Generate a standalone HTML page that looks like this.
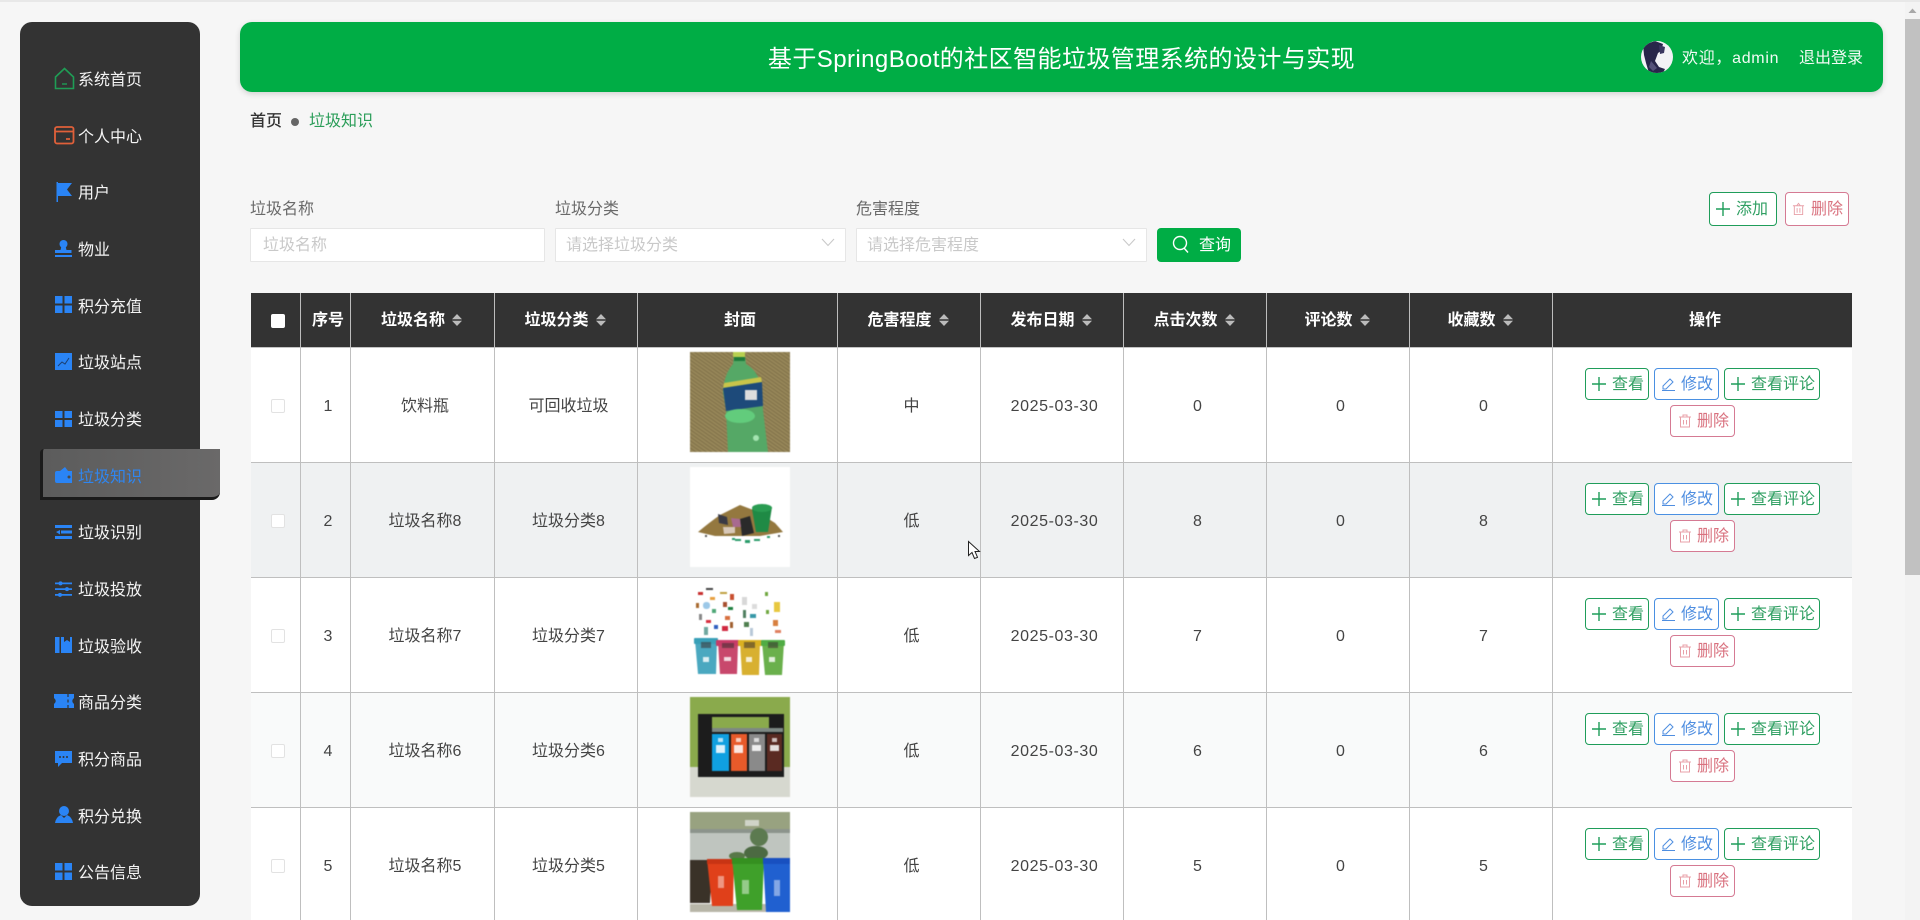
<!DOCTYPE html>
<html lang="zh"><head><meta charset="utf-8"><title>垃圾知识</title>
<style>
*{box-sizing:border-box}
html,body{margin:0;padding:0;width:1920px;height:920px;overflow:hidden;background:#f6f6f6;font-family:"Liberation Sans","Noto Sans CJK SC",sans-serif;font-size:16px;color:#444}
#wrap{position:absolute;left:0;top:0;width:1920px;height:920px;overflow:hidden}
.t{position:absolute;line-height:20px;white-space:nowrap;margin-top:2px}
#top{position:absolute;left:0;top:0;width:1920px;height:2px;background:#e8e8e8}
#side{position:absolute;left:20px;top:22px;width:180px;height:884px;background:#333;border-radius:12px}
#act{position:absolute;left:40px;top:449px;width:180px;height:51px;border-left:3px solid #1b1b1b;border-bottom:3px solid #1b1b1b;border-radius:4px 0 8px 0;background:linear-gradient(90deg,#5c5c5c,#6a6969)}
.s{color:#f4f4f4;left:78px}
#head{position:absolute;left:240px;top:22px;width:1643px;height:70px;background:#00ad45;border-radius:12px;box-shadow:0 2px 6px rgba(0,0,0,.15)}
.inp{position:absolute;top:228px;height:34px;background:#fff;border:1px solid #e6e6e6;border-radius:1px}
.ph{color:#c9c9c9}
.lb{color:#6a6a6a}
table{position:absolute;left:251px;top:293px;width:1601px;border-collapse:separate;border-spacing:0;table-layout:fixed;background:#fff}
th{background:#333;color:#fff;height:55px;font-weight:700;padding:2px 0 0 5px;border-right:1px solid #bdbdbd;border-bottom:1px solid #c4c4c4;text-align:center;line-height:20px}
th:last-child,td:last-child{border-right:0}
td{height:115px;padding:3px 0 0 5px;border-right:1px solid #bfbfbf;border-bottom:1px solid #bfbfbf;text-align:center;color:#444;line-height:20px}
td.d{letter-spacing:.6px}
tr.h td{background:#eff1f2}
tr.z td{background:#f9fafa}
.c{display:inline-block;vertical-align:-1px;margin:0 7px 0 7px}
.cb{position:absolute;left:271px;width:14px;height:14px;background:#fff;border:1px solid #e2e2e2;border-radius:2px}
.b{position:absolute;height:32px;background:#fff;border:1px solid;border-radius:4px;line-height:30px;white-space:nowrap}
.b svg{position:absolute;left:6px;top:8px}
.b span{position:absolute;left:26px;top:1px}
.g{border-color:#1f9d5a;color:#2f9f62}
.u{border-color:#4a90e2;color:#4f8ee0}
.r{border-color:#d57a93;color:#d9727f}
.im{position:absolute;left:690px;width:100px;height:100px;filter:blur(.6px)}
</style></head><body><div id="wrap">
<div id="top"></div>

<div id="side"></div>
<div id="act"></div>
<svg style="position:absolute;left:0;top:0" width="220" height="920" viewBox="0 0 220 920">
<path d="M55.5 77 64.5 68.5 73.5 77V88.5H55.5Z" fill="none" stroke="#1f9d55" stroke-width="1.6"/><path d="M62 84h5" stroke="#1f9d55" stroke-width="1.4"/>
<rect x="55" y="127" width="18.5" height="16.5" rx="2" fill="none" stroke="#e0603a" stroke-width="1.8"/><path d="M55 131.5h18.5M66 139h4" stroke="#e0603a" stroke-width="1.8"/>
<g fill="#2a84f5">
<path d="M56.5 182H58V183H72L67 189.5 72 196H58V202H56.5Z"/>
<circle cx="63.5" cy="244" r="4"/><path d="M61.5 246h4l1 4h5v3H55v-3h5.500zM55 255h17v2H55z"/>
<path d="M55 296h7.500v7.500H55zM64.500 296H72v7.500h-7.500zM55 305.500h7.500V313H55zM64.500 305.500H72V313h-7.500z"/>
<rect x="55" y="353" width="17" height="17"/>
<path d="M55 411h7.500v7H55zM64.500 411H72v7h-7.500zM55 420h7.500v7H55zM64.500 420H72v7h-7.500z"/>
<path d="M55 473Q55 471 57 471H60L65 467 68 471H72V483H57Q55 483 55 481Z"/>
<path d="M55 525h17v3H55zM61 530.500h11v3H61zM55 536h17v3H55zM60 530v4.500L56 532z"/>
<path d="M55 582.500h17v1.800H55zM55 588.200h17v1.800H55zM55 594h17v1.800H55z"/><circle cx="60.500" cy="583.400" r="2"/><circle cx="67" cy="589.100" r="2"/><circle cx="60" cy="594.900" r="2"/>
<path d="M55 637h4.500v16H55zM61 637h3V642L67 640 70 642V637h2v16H61z"/>
<path d="M54 694H74V698Q70.500 701 74 704V708H54V704Q57.500 701 54 698Z"/>
<path d="M55 751H72V763H62L58 767V763H55Z"/>
<circle cx="64" cy="811" r="5"/><path d="M55 823Q56 817 61 815L64 818 67 815Q72 817 73 823Z"/>
<path d="M55 863h7.500v7.500H55zM64.500 863H72v7.500h-7.500zM55 872.500h7.500V880H55zM64.500 872.500H72V880h-7.500z"/>
</g>
<path d="M58 366 62 362 65 364 69 358" fill="none" stroke="#1c3f70" stroke-width="1"/>
<circle cx="69" cy="477" r="1.500" fill="#4a4a4a"/>
<path d="M68 694v3M68 699.500v3M68 705v3" stroke="#333" stroke-width="1.200"/>
<circle cx="60" cy="757" r="1" fill="#333"/><circle cx="63.500" cy="757" r="1" fill="#333"/><circle cx="67" cy="757" r="1" fill="#333"/>
</svg>
<div class="t s" style="top:69px">系统首页</div>
<div class="t s" style="top:126px">个人中心</div>
<div class="t s" style="top:182px">用户</div>
<div class="t s" style="top:239px">物业</div>
<div class="t s" style="top:296px">积分充值</div>
<div class="t s" style="top:352px">垃圾站点</div>
<div class="t s" style="top:409px">垃圾分类</div>
<div class="t s" style="top:466px;color:#2f86f0">垃圾知识</div>
<div class="t s" style="top:522px">垃圾识别</div>
<div class="t s" style="top:579px">垃圾投放</div>
<div class="t s" style="top:636px">垃圾验收</div>
<div class="t s" style="top:692px">商品分类</div>
<div class="t s" style="top:749px">积分商品</div>
<div class="t s" style="top:806px">积分兑换</div>
<div class="t s" style="top:862px">公告信息</div>

<div id="head"></div>
<div class="t" style="left:240px;width:1643px;text-align:center;top:46px;line-height:24px;font-size:24px;color:#fff;letter-spacing:.43px">基于SpringBoot的社区智能垃圾管理系统的设计与实现</div>
<svg style="position:absolute;left:1641px;top:41px" width="32" height="32" viewBox="0 0 32 32"><defs><clipPath id="av"><circle cx="16" cy="16" r="16"/></clipPath></defs><g clip-path="url(#av)"><rect width="32" height="32" fill="#f2f2f6"/><path d="M2 4 14 0 22 3 20 10 17 12 14 20 18 26 24 28 22 32H8L5 22 3 14Z" fill="#28264a"/><path d="M18 4 24 6 23 12 19 13Z" fill="#3a3760"/><path d="M10 20 16 27 12 30 8 26Z" fill="#55527a"/></g></svg>
<div class="t" style="left:1682px;top:47px;color:#f2fbf5;letter-spacing:.7px">欢迎，admin</div>
<div class="t" style="left:1799px;top:47px;color:#f2fbf5">退出登录</div>

<div class="t" style="left:250px;top:110px;color:#333;font-weight:500">首页</div>
<div style="position:absolute;left:291px;top:118px;width:8px;height:8px;border-radius:50%;background:#666"></div>
<div class="t" style="left:309px;top:110px;color:#2a9d58">垃圾知识</div>

<div class="t lb" style="left:250px;top:198px">垃圾名称</div>
<div class="inp" style="left:250px;width:295px"></div>
<div class="t ph" style="left:263px;top:234px">垃圾名称</div>
<div class="t lb" style="left:555px;top:198px">垃圾分类</div>
<div class="inp" style="left:555px;width:291px"></div>
<div class="t ph" style="left:566px;top:234px">请选择垃圾分类</div>
<div class="t lb" style="left:856px;top:198px">危害程度</div>
<div class="inp" style="left:856px;width:291px"></div>
<div class="t ph" style="left:867px;top:234px">请选择危害程度</div>
<svg style="position:absolute;left:820px;top:236px" width="320" height="14" viewBox="0 0 320 14"><path d="M2 3 8 9.500 14 3M303 3 309 9.500 315 3" fill="none" stroke="#c9c9c9" stroke-width="1.100"/></svg>
<div style="position:absolute;left:1157px;top:228px;width:84px;height:34px;background:#00ad45;border-radius:4px"></div>
<svg style="position:absolute;left:1171px;top:234px" width="20" height="22" viewBox="0 0 20 22"><circle cx="9" cy="9" r="6.500" fill="none" stroke="#fff" stroke-width="1.400"/><path d="M13 14 17 18.500" stroke="#fff" stroke-width="1.400"/></svg>
<div class="t" style="left:1199px;top:234px;color:#fff">查询</div>

<div class="b g" style="left:1709px;top:192px;width:68px;height:34px;line-height:32px"><svg style="left:6px;top:9px" width="14" height="14" viewBox="0 0 14 14"><path d="M7 0V14M0 7H14" stroke="#1f9d5a" stroke-width="1.400"/></svg><span style="left:26px">添加</span></div>
<div class="b r" style="left:1785px;top:192px;width:64px;height:34px;line-height:32px"><svg style="left:6px;top:9px" width="13" height="14" viewBox="0 0 14 14"><path d="M1 3.500H13M5 3.500 7 1 9 3.500M2.500 3.500V13H11.500V3.500M5.500 6V11M8.500 6V11" fill="none" stroke="#e8a0a8" stroke-width="1"/></svg><span style="left:25px">删除</span></div>

<table>
<colgroup><col style="width:50px"><col style="width:50px"><col style="width:144px"><col style="width:143px"><col style="width:200px"><col style="width:143px"><col style="width:143px"><col style="width:143px"><col style="width:143px"><col style="width:143px"><col></colgroup>
<tr>
<th></th><th>序号</th>
<th>垃圾名称<svg class="c" width="10" height="12" viewBox="0 0 10 12"><path d="M0 5.300 5 0 10 5.300ZM0 6.700 5 12 10 6.700Z" fill="#bbb"/></svg></th>
<th>垃圾分类<svg class="c" width="10" height="12" viewBox="0 0 10 12"><path d="M0 5.300 5 0 10 5.300ZM0 6.700 5 12 10 6.700Z" fill="#bbb"/></svg></th>
<th>封面</th>
<th>危害程度<svg class="c" width="10" height="12" viewBox="0 0 10 12"><path d="M0 5.300 5 0 10 5.300ZM0 6.700 5 12 10 6.700Z" fill="#bbb"/></svg></th>
<th>发布日期<svg class="c" width="10" height="12" viewBox="0 0 10 12"><path d="M0 5.300 5 0 10 5.300ZM0 6.700 5 12 10 6.700Z" fill="#bbb"/></svg></th>
<th>点击次数<svg class="c" width="10" height="12" viewBox="0 0 10 12"><path d="M0 5.300 5 0 10 5.300ZM0 6.700 5 12 10 6.700Z" fill="#bbb"/></svg></th>
<th>评论数<svg class="c" width="10" height="12" viewBox="0 0 10 12"><path d="M0 5.300 5 0 10 5.300ZM0 6.700 5 12 10 6.700Z" fill="#bbb"/></svg></th>
<th>收藏数<svg class="c" width="10" height="12" viewBox="0 0 10 12"><path d="M0 5.300 5 0 10 5.300ZM0 6.700 5 12 10 6.700Z" fill="#bbb"/></svg></th>
<th>操作</th>
</tr>
<tr><td></td><td>1</td><td>饮料瓶</td><td>可回收垃圾</td><td></td><td>中</td><td class="d">2025-03-30</td><td>0</td><td>0</td><td>0</td><td></td></tr>
<tr class="h"><td></td><td>2</td><td>垃圾名称8</td><td>垃圾分类8</td><td></td><td>低</td><td class="d">2025-03-30</td><td>8</td><td>0</td><td>8</td><td></td></tr>
<tr><td></td><td>3</td><td>垃圾名称7</td><td>垃圾分类7</td><td></td><td>低</td><td class="d">2025-03-30</td><td>7</td><td>0</td><td>7</td><td></td></tr>
<tr class="z"><td></td><td>4</td><td>垃圾名称6</td><td>垃圾分类6</td><td></td><td>低</td><td class="d">2025-03-30</td><td>6</td><td>0</td><td>6</td><td></td></tr>
<tr><td></td><td>5</td><td>垃圾名称5</td><td>垃圾分类5</td><td></td><td>低</td><td class="d">2025-03-30</td><td>5</td><td>0</td><td>5</td><td></td></tr>
</table>

<div class="cb" style="top:314px;border-color:#fff"></div>
<div class="cb" style="top:399px"></div>
<div class="cb" style="top:514px"></div>
<div class="cb" style="top:629px"></div>
<div class="cb" style="top:744px"></div>
<div class="cb" style="top:859px"></div>

<!-- images -->
<svg class="im" style="top:352px" viewBox="0 0 100 100"><defs><pattern id="hp" width="3" height="3" patternUnits="userSpaceOnUse" patternTransform="rotate(35)"><rect width="3" height="3" fill="#978759"/><rect width="3" height="1" fill="#7f7048"/></pattern></defs><rect width="100" height="100" fill="url(#hp)"/><path d="M44 4 55 4 56 12Q70 20 72 40L73 58 78 100H38L36 58 33 40Q34 22 43 12Z" fill="#55a866"/><path d="M34 31 71 25 72 30 33 36Z" fill="#c9c44a"/><path d="M33 36 72 30 73 54 36 59Z" fill="#1d4a7a"/><rect x="55" y="38" width="12" height="10" fill="#ddd"/><ellipse cx="50" cy="64" rx="15" ry="7" fill="#62cc7c"/><ellipse cx="66" cy="86" rx="3" ry="3" fill="#a4e4b0"/><path d="M43 0H55V5H43Z" fill="#b8d050"/><path d="M44 5H55V9H44Z" fill="#1e7a3a"/></svg>

<svg class="im" style="top:467px" viewBox="0 0 100 100"><rect width="100" height="100" fill="#fff"/><path d="M8 65Q20 55 30 48L50 38 66 44 85 56 93 65 70 69H25Z" fill="#94783f"/><path d="M62 42 82 40 78 65 66 65Z" fill="#1f8a45"/><ellipse cx="72" cy="41" rx="10" ry="4" fill="#2a9c52"/><path d="M50 52 60 49 64 66 52 69Z" fill="#2a2a2a"/><path d="M28 47 37 50 38 58 29 56Z" fill="#3a3a44"/><path d="M33 60 45 60 45 66 34 67Z" fill="#d8c8b8"/><path d="M41 51 50 52 51 60 43 60Z" fill="#a86a90"/><path d="M45 72h6v2h-6zM55 73h5v3h-5zM64 72h6v2h-6zM42 71h3v2h-3zM77 69h3v2h-3z" fill="#2a9c6a"/><path d="M88 68h2v2h-2zM15 68h2v2h-2z" fill="#555"/></svg>

<svg class="im" style="top:582px" viewBox="0 0 100 100"><rect width="100" height="100" fill="#fff"/>
<g><rect x="8" y="10" width="5" height="3" fill="#c83030"/><rect x="13" y="20" width="7" height="7" rx="3" fill="#9cc8e8"/><rect x="6" y="21" width="3" height="5" fill="#a86a30"/><rect x="16" y="6" width="7" height="2" fill="#444"/><rect x="20" y="15" width="5" height="3" fill="#e8a040"/><rect x="22" y="27" width="4" height="4" fill="#50a878"/><rect x="9" y="32" width="3" height="6" fill="#888"/><rect x="16" y="38" width="5" height="3" fill="#d83040"/><rect x="14" y="45" width="4" height="8" fill="#70a8a0"/><rect x="24" y="43" width="4" height="4" fill="#3060c0"/><rect x="33" y="20" width="4" height="5" fill="#a85030"/><rect x="30" y="10" width="7" height="2" fill="#c0a040"/><rect x="38" y="25" width="5" height="3" fill="#208040"/><rect x="35" y="34" width="5" height="4" fill="#d87040"/><rect x="40" y="12" width="4" height="6" fill="#c85030"/><rect x="32" y="44" width="6" height="5" fill="#d02840"/><rect x="40" y="40" width="3" height="6" fill="#a06030"/><rect x="52" y="15" width="5" height="8" fill="#d8d8d8"/><rect x="53" y="28" width="3" height="8" fill="#508060"/><rect x="62" y="22" width="5" height="5" fill="#dcdcdc"/><rect x="60" y="32" width="6" height="4" fill="#3898a8"/><rect x="54" y="40" width="5" height="5" fill="#508050"/><rect x="60" y="46" width="3" height="8" fill="#b8c8d8"/><rect x="75" y="10" width="3" height="4" fill="#70a840"/><rect x="84" y="20" width="6" height="10" fill="#e8c840"/><rect x="76" y="28" width="3" height="4" fill="#70a840"/><rect x="83" y="38" width="5" height="6" fill="#d88040"/><rect x="85" y="48" width="6" height="3" fill="#e08060"/></g>
<path d="M5 58H27L26 92H8Z" fill="#4aa8c0"/><rect x="4" y="56" width="24" height="6" rx="1" fill="#38a0b8"/>
<path d="M28 60H48L47 92H30Z" fill="#c8486c"/><rect x="26" y="58" width="24" height="6" rx="1" fill="#c83c68"/>
<path d="M50 60H70L69 93H52Z" fill="#d8b030"/><rect x="48" y="58" width="24" height="6" rx="1" fill="#dab020"/>
<path d="M72 60H94L92 93H75Z" fill="#6ab04c"/><rect x="71" y="58" width="24" height="6" rx="1" fill="#50ac44"/>
<path d="M11 60h10v6H11zM32 61h12v5H32zM54 60h11v6H54zM78 60h10v6H78z" fill="#3a3030" opacity=".55"/>
<path d="M13 75h6v5h-6zM34 75h7v4h-7zM56 75h6v5h-6zM79 75h6v5h-6z" fill="#fff" opacity=".8"/></svg>

<svg class="im" style="top:697px" viewBox="0 0 100 100"><rect width="100" height="72" fill="#8aaa4c"/><rect y="70" width="100" height="30" fill="#d6d8cf"/><rect x="8" y="17" width="86" height="63" fill="#1c1c1c"/><rect x="22" y="20" width="57" height="12" fill="#8aaa4c"/><rect x="22" y="31" width="71" height="4" fill="#7d8884"/><rect x="22" y="37" width="17" height="37" fill="#10a0e0"/><rect x="41" y="37" width="16" height="37" fill="#e85a2a"/><rect x="59" y="37" width="16" height="37" fill="#8a8a8a"/><rect x="77" y="37" width="15" height="37" fill="#5a2a22"/><path d="M26 48h9v8h-9zM44 48h9v8h-9zM62 48h9v6h-9zM80 48h9v6h-9z" fill="#fff" opacity=".85"/><path d="M28 41h5v4h-5zM46 41h5v4h-5zM64 41h5v4h-5zM82 41h5v4h-5z" fill="#fff" opacity=".7"/></svg>

<svg class="im" style="top:812px" viewBox="0 0 100 100"><rect width="100" height="20" fill="#98a280"/><rect y="19" width="100" height="30" fill="#bfc5bf"/><rect y="17" width="100" height="4" fill="#8c948c"/><rect y="92" width="100" height="8" fill="#b8b6a8"/><circle cx="69" cy="25" r="9" fill="#5c7a50"/><ellipse cx="66" cy="41" rx="12" ry="7" fill="#4c6a42"/><ellipse cx="47" cy="44" rx="8" ry="4" fill="#587848"/><rect x="55" y="8" width="14" height="6" fill="#d0d4c8"/><path d="M0 48H22L20 91H0Z" fill="#3a3228"/><path d="M17 47H44L43 94H22Z" fill="#e0401a"/><rect x="17" y="47" width="27" height="5" fill="#c83414"/><path d="M42 46H74L72 98H47Z" fill="#3fa02a"/><rect x="42" y="46" width="32" height="6" fill="#359020"/><path d="M73 46H100V100H76Z" fill="#2060d0"/><rect x="73" y="46" width="27" height="6" fill="#1850c0"/><path d="M28 64h6v12h-6zM52 68h7v14h-7zM84 68h6v16h-6z" fill="#fff" opacity=".45"/></svg>

<!-- row buttons: row 1 -->
<div class="b g" style="left:1585px;top:368px;width:64px"><svg width="14" height="14" viewBox="0 0 14 14"><path d="M7 0V14M0 7H14" stroke="#1f9d5a" stroke-width="1.400"/></svg><span>查看</span></div>
<div class="b u" style="left:1654px;top:368px;width:65px"><svg width="15" height="14" viewBox="0 0 15 14"><path d="M2 9 9 2 12 5 5 12H2ZM1 13.500H14" fill="none" stroke="#4f8ee0" stroke-width="1"/></svg><span>修改</span></div>
<div class="b g" style="left:1724px;top:368px;width:96px"><svg width="14" height="14" viewBox="0 0 14 14"><path d="M7 0V14M0 7H14" stroke="#1f9d5a" stroke-width="1.400"/></svg><span>查看评论</span></div>
<div class="b r" style="left:1670px;top:405px;width:65px"><svg style="left:7px" width="14" height="14" viewBox="0 0 14 14"><path d="M1 3H13M5 3V1H9V3M2.500 3V13H11.500V3M5.500 6V10.500M8.500 6V10.500" fill="none" stroke="#e8a0a8" stroke-width="1"/></svg><span>删除</span></div>
<!-- row 2 -->
<div class="b g" style="left:1585px;top:483px;width:64px"><svg width="14" height="14" viewBox="0 0 14 14"><path d="M7 0V14M0 7H14" stroke="#1f9d5a" stroke-width="1.400"/></svg><span>查看</span></div>
<div class="b u" style="left:1654px;top:483px;width:65px"><svg width="15" height="14" viewBox="0 0 15 14"><path d="M2 9 9 2 12 5 5 12H2ZM1 13.500H14" fill="none" stroke="#4f8ee0" stroke-width="1"/></svg><span>修改</span></div>
<div class="b g" style="left:1724px;top:483px;width:96px"><svg width="14" height="14" viewBox="0 0 14 14"><path d="M7 0V14M0 7H14" stroke="#1f9d5a" stroke-width="1.400"/></svg><span>查看评论</span></div>
<div class="b r" style="left:1670px;top:520px;width:65px"><svg style="left:7px" width="14" height="14" viewBox="0 0 14 14"><path d="M1 3H13M5 3V1H9V3M2.500 3V13H11.500V3M5.500 6V10.500M8.500 6V10.500" fill="none" stroke="#e8a0a8" stroke-width="1"/></svg><span>删除</span></div>
<!-- row 3 -->
<div class="b g" style="left:1585px;top:598px;width:64px"><svg width="14" height="14" viewBox="0 0 14 14"><path d="M7 0V14M0 7H14" stroke="#1f9d5a" stroke-width="1.400"/></svg><span>查看</span></div>
<div class="b u" style="left:1654px;top:598px;width:65px"><svg width="15" height="14" viewBox="0 0 15 14"><path d="M2 9 9 2 12 5 5 12H2ZM1 13.500H14" fill="none" stroke="#4f8ee0" stroke-width="1"/></svg><span>修改</span></div>
<div class="b g" style="left:1724px;top:598px;width:96px"><svg width="14" height="14" viewBox="0 0 14 14"><path d="M7 0V14M0 7H14" stroke="#1f9d5a" stroke-width="1.400"/></svg><span>查看评论</span></div>
<div class="b r" style="left:1670px;top:635px;width:65px"><svg style="left:7px" width="14" height="14" viewBox="0 0 14 14"><path d="M1 3H13M5 3V1H9V3M2.500 3V13H11.500V3M5.500 6V10.500M8.500 6V10.500" fill="none" stroke="#e8a0a8" stroke-width="1"/></svg><span>删除</span></div>
<!-- row 4 -->
<div class="b g" style="left:1585px;top:713px;width:64px"><svg width="14" height="14" viewBox="0 0 14 14"><path d="M7 0V14M0 7H14" stroke="#1f9d5a" stroke-width="1.400"/></svg><span>查看</span></div>
<div class="b u" style="left:1654px;top:713px;width:65px"><svg width="15" height="14" viewBox="0 0 15 14"><path d="M2 9 9 2 12 5 5 12H2ZM1 13.500H14" fill="none" stroke="#4f8ee0" stroke-width="1"/></svg><span>修改</span></div>
<div class="b g" style="left:1724px;top:713px;width:96px"><svg width="14" height="14" viewBox="0 0 14 14"><path d="M7 0V14M0 7H14" stroke="#1f9d5a" stroke-width="1.400"/></svg><span>查看评论</span></div>
<div class="b r" style="left:1670px;top:750px;width:65px"><svg style="left:7px" width="14" height="14" viewBox="0 0 14 14"><path d="M1 3H13M5 3V1H9V3M2.500 3V13H11.500V3M5.500 6V10.500M8.500 6V10.500" fill="none" stroke="#e8a0a8" stroke-width="1"/></svg><span>删除</span></div>
<!-- row 5 -->
<div class="b g" style="left:1585px;top:828px;width:64px"><svg width="14" height="14" viewBox="0 0 14 14"><path d="M7 0V14M0 7H14" stroke="#1f9d5a" stroke-width="1.400"/></svg><span>查看</span></div>
<div class="b u" style="left:1654px;top:828px;width:65px"><svg width="15" height="14" viewBox="0 0 15 14"><path d="M2 9 9 2 12 5 5 12H2ZM1 13.500H14" fill="none" stroke="#4f8ee0" stroke-width="1"/></svg><span>修改</span></div>
<div class="b g" style="left:1724px;top:828px;width:96px"><svg width="14" height="14" viewBox="0 0 14 14"><path d="M7 0V14M0 7H14" stroke="#1f9d5a" stroke-width="1.400"/></svg><span>查看评论</span></div>
<div class="b r" style="left:1670px;top:865px;width:65px"><svg style="left:7px" width="14" height="14" viewBox="0 0 14 14"><path d="M1 3H13M5 3V1H9V3M2.500 3V13H11.500V3M5.500 6V10.500M8.500 6V10.500" fill="none" stroke="#e8a0a8" stroke-width="1"/></svg><span>删除</span></div>

<!-- cursor -->
<svg style="position:absolute;left:960px;top:535px" width="30" height="30" viewBox="960 535 30 30"><path d="M968.500 541.500V555.500L972 552.500 974.500 558.500 977.500 557.300 975 551.500H979.500Z" fill="#fff" stroke="#222" stroke-width="1"/></svg>

<!-- scrollbar -->
<div style="position:absolute;left:1905px;top:2px;width:15px;height:918px;background:#f3f3f3"></div>
<svg style="position:absolute;left:1905px;top:6px" width="15" height="10" viewBox="0 0 15 10"><path d="M3.500 7 7.500 2.500 11.500 7Z" fill="#a8a8a8"/></svg>
<div style="position:absolute;left:1905px;top:19px;width:15px;height:556px;background:#c1c1c1"></div>
</div></body></html>
